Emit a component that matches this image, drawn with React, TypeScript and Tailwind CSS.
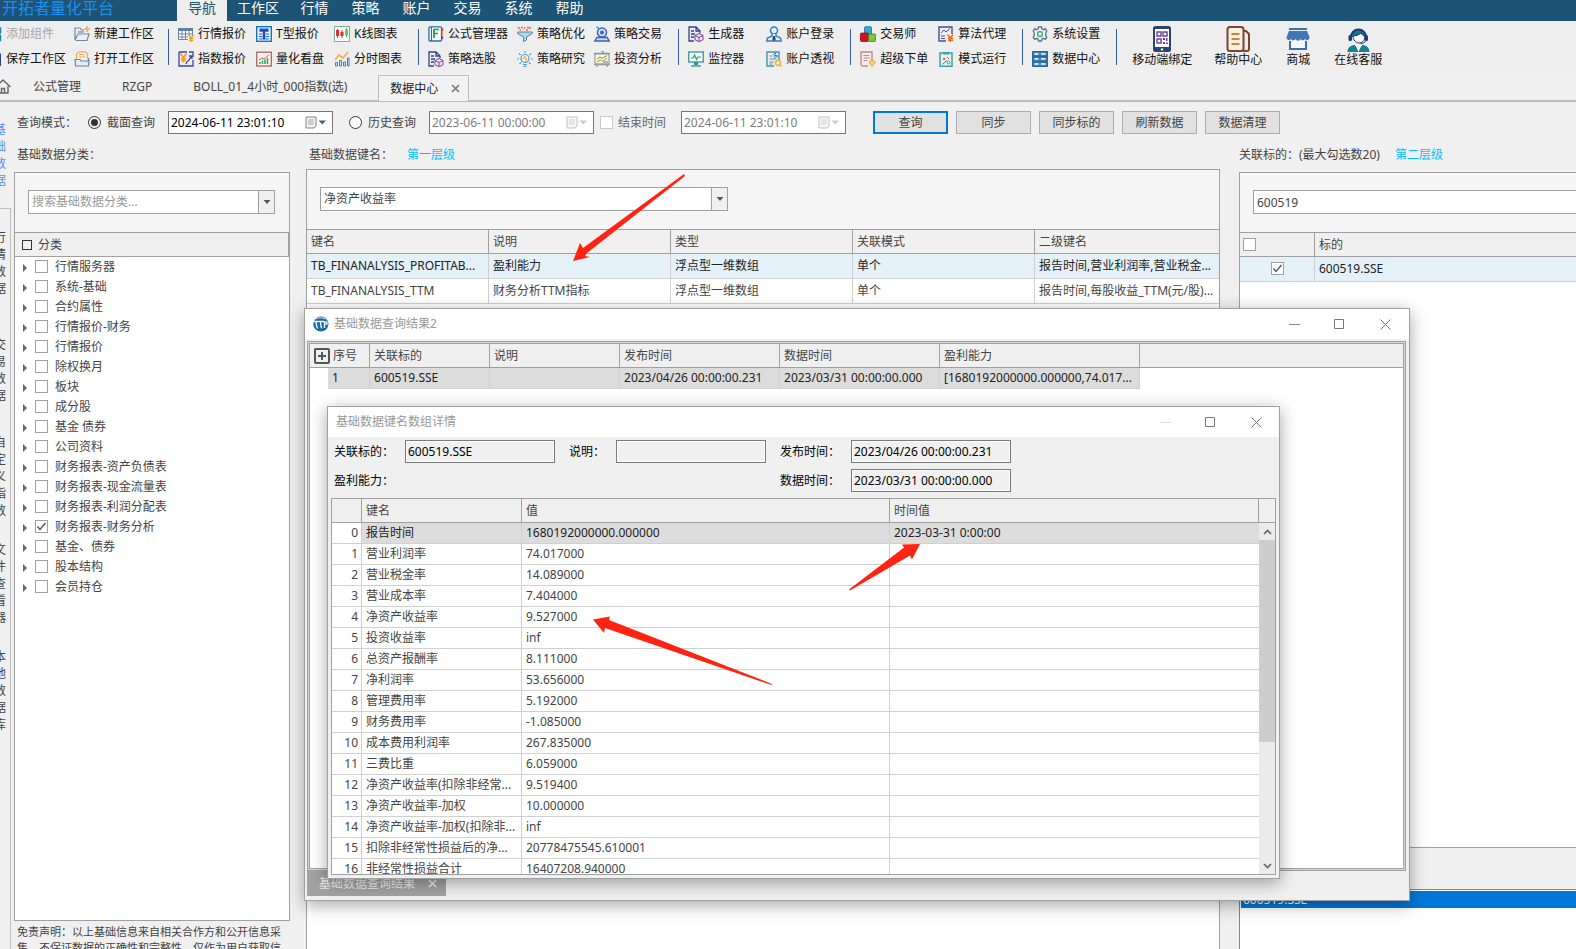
import React from 'react';

const menus = ['导航', '工作区', '行情', '策略', '账户', '交易', '系统', '帮助'];

const icons: Record<string, React.ReactNode> = {
  widgets: (
    <g fill="none" stroke="#1e86a8" strokeWidth="1.5">
      <rect x="2" y="2" width="5" height="5" />
      <rect x="9.5" y="2" width="5" height="5" />
      <rect x="2" y="9.5" width="5" height="5" />
      <rect x="9.5" y="9.5" width="5" height="5" />
    </g>
  ),
  save: (
    <g>
      <path d="M1 1h12l2 2v12H1z" fill="#2e3f8f" />
      <path d="M4 1h7v5H4zM3 9h9v6H3z" fill="#dfe6f5" />
    </g>
  ),
  folderNew: (
    <g fill="none" strokeWidth="1.2">
      <path d="M1 14V2h5l1.5 2H10M1 14l3-6h11l-2 6.5H1.5M14 8V7" stroke="#6c8ba8" />
      <path d="M4 6h6" stroke="#6c8ba8" />
      <path d="M13 0v6M10 3h6" stroke="#f0a860" strokeWidth="1.5" />
    </g>
  ),
  folderOpen: (
    <g fill="none" strokeWidth="1.2">
      <path d="M2.5 8V2.5L5 .8h6.500l2 2V8" stroke="#f0a860" fill="#fdf0dc" />
      <path d="M5 3.500h5M5 6h6.500" stroke="#f0a860" />
      <path d="M1 8.500h5l1 1.500h8l-.5 5H1.500zM14.500 10V7" stroke="#5f85a6" fill="#e4edf5" />
    </g>
  ),
  grid: (
    <g>
      <path d="M.5 2.500h14v11H.5z" fill="#fff" stroke="#6c8ba8" />
      <path d="M0 2h15v3H0z" fill="#5f7fa3" />
      <path d="M.5 8h14M.5 11h11M4 5v8.500M7.500 5v8.500M11 5v8.500" stroke="#6c8ba8" fill="none" />
      <path d="M10 9h6v7h-6z" fill="#eee" />
      <path d="M10.500 9l2.500 3 2.500-3M13 12v4M11 12.500h4M11 14.300h4" stroke="#f39a1f" strokeWidth="1.2" fill="none" />
    </g>
  ),
  tQuote: (
    <g>
      <rect x=".7" y=".7" width="14.600" height="14.600" fill="#eaf4fc" stroke="#1173c9" strokeWidth="1.400" />
      <path d="M3 3h10M3 5h3M3 8h3M3 10.500h3M10 5h3M10 8h3M10 10.500h3M3 13h10" stroke="#1173c9" />
      <path d="M4 3h8v2.500H9.300V13H6.700V5.500H4z" fill="#2b3fc0" />
    </g>
  ),
  kline: (
    <g>
      <rect x=".5" y=".5" width="15" height="15" fill="#fff" stroke="#7fae95" />
      <path d="M3.500 3v9M8 4v8" stroke="#e03030" />
      <path d="M2 4h3v6H2zM6.500 6h3v4h-3z" fill="#e03030" />
      <path d="M12.500 2v9" stroke="#36b33b" />
      <path d="M11 3.500h3V9h-3z" fill="#5cd04a" />
    </g>
  ),
  index: (
    <g fill="none">
      <path d="M1 1h8M1 1v14h14V9M15 6V1h-4" stroke="#3f449e" strokeWidth="1.300" />
      <path d="M2.500 2.500l3 4 3-4M5.500 6.500v5M3 7.500h5M3 9.500h5" stroke="#f39a1f" strokeWidth="1.500" />
      <path d="M8 13c1-4 2-2 3-4s1-2 3-4M11 5h3v3" stroke="#3f449e" strokeWidth="1.300" />
    </g>
  ),
  board: (
    <g fill="none">
      <rect x=".7" y="1.200" width="14.600" height="13.800" stroke="#a8685c" strokeWidth="1.300" fill="#f8f4f2" />
      <path d="M4 13v-2M6.500 13V9.500M9 13V8.500M11.500 13V7" stroke="#2fae5a" strokeWidth="1.600" />
      <path d="M3 9l3-2 2 1 5-4" stroke="#e0554a" />
    </g>
  ),
  minute: (
    <g fill="none">
      <path d="M1 9l4-5 4 3 5-6" stroke="#f3b24a" strokeWidth="1.700" />
      <path d="M1.500 15v-3.500h2V15zM5.500 15V9.500h2V15zM9.500 15v-4h2v4zM13.500 15V7h1.500v8z" fill="#dbe9f2" stroke="#4b7ea8" />
    </g>
  ),
  formula: (
    <g>
      <rect x="1" y=".8" width="12.500" height="14.200" rx="1" fill="#fff" stroke="#1572b8" strokeWidth="1.300" />
      <path d="M3.500 1v14" stroke="#1572b8" />
      <path d="M6 12V3.500h5M6 7.500h4" fill="none" stroke="#17a03c" strokeWidth="1.700" />
      <path d="M14.500 2v3" stroke="#e04646" strokeWidth="1.300" />
      <path d="M14.500 6v3" stroke="#f3a32c" strokeWidth="1.300" />
      <path d="M14.500 10v3" stroke="#7d3fb0" strokeWidth="1.300" />
    </g>
  ),
  docCube: (
    <g fill="none">
      <path d="M6 15H1V1h7l4 4v2M8 1v4h4M3 5h3M3 8h4M3 11h3" stroke="#2f438f" strokeWidth="1.300" />
      <path d="M11 7.500l4 2v4.200l-4 2-4-2V9.500zM7 9.500l4 2 4-2M11 11.500v4" stroke="#8c4fa8" strokeWidth="1.100" fill="#f5ebf8" />
    </g>
  ),
  funnel: (
    <g>
      <path d="M1 1l2 2M4 1.500h2M8 1l-1 2M10 1.500h2M14 1l-2 2M3 4h1M9 4h2" stroke="#e8665c" strokeWidth="1.300" />
      <path d="M.7 6h14.600v1.500L9.500 11v3l-3 1.500V11L.7 7.500z" fill="#b8d5e8" stroke="#4784aa" />
    </g>
  ),
  bulb: (
    <g fill="none">
      <path d="M8 0v2M2 2.500l1.500 1.500M14 2.500L12.500 4M0 8h2M14 8h2M2.500 13L4 11.500M13.500 13L12 11.500" stroke="#5a9dbd" strokeWidth="1.200" />
      <circle cx="8" cy="7.500" r="4" stroke="#5a9dbd" fill="#eaf5fa" strokeWidth="1.200" />
      <path d="M6 8l2-3v3h2l-2 3" stroke="#f0a342" />
      <path d="M6 13.500h4M6.500 15.300h3" stroke="#5a9dbd" strokeWidth="1.200" />
    </g>
  ),
  robot: (
    <g>
      <circle cx="3.500" cy="1.500" r="1.200" fill="#35b6e0" />
      <path d="M4 2l3 2" stroke="#35b6e0" />
      <circle cx="8" cy="6.500" r="4.500" fill="#dbe6f8" stroke="#3a5fb8" strokeWidth="1.500" />
      <circle cx="8" cy="6.500" r="2" fill="#3a5fb8" />
      <path d="M.8 15l2-3.500h10.400l2 3.500z" fill="#c9d8f3" stroke="#3a5fb8" strokeWidth="1.400" />
    </g>
  ),
  invest: (
    <g fill="none">
      <path d="M0 2.500h16M7 0h2v2" stroke="#9a9a9a" strokeWidth="1.400" />
      <rect x="1" y="3" width="14" height="10" stroke="#8a8a98" fill="#f7f7f2" />
      <path d="M3 8l3-2 2 1.500 5-3" stroke="#3fae5b" />
      <path d="M3 11l3-2 3 1 4-3" stroke="#eda92f" strokeWidth="1.300" />
      <path d="M9 11h5" stroke="#3b7ec8" />
      <path d="M2.500 16l1-3M13.500 16l-1-3M0 13.500h16" stroke="#9a9a9a" strokeWidth="1.300" />
    </g>
  ),
  monitor: (
    <g fill="none">
      <rect x=".7" y="1" width="14.600" height="10" stroke="#4e98a0" strokeWidth="1.400" fill="#f4fbfa" />
      <path d="M3 7h2l1.500-3 2 4.500L10 6h3" stroke="#25a36c" strokeWidth="1.200" />
      <path d="M6 11h4v3H6z" fill="#3f8f96" />
      <path d="M3 15h10" stroke="#3f8f96" strokeWidth="1.400" />
    </g>
  ),
  user: (
    <g>
      <circle cx="8" cy="4.500" r="3.500" fill="#e9f3fc" stroke="#2e7cc4" strokeWidth="1.500" />
      <path d="M6 8v2l-4.500 2-.7 3h14.400l-.7-3L10 10V8" fill="#e9f3fc" stroke="#2e7cc4" strokeWidth="1.400" />
      <path d="M7 10h2l.7 4L8 15l-1.700-1z" fill="#27456f" />
    </g>
  ),
  perspective: (
    <g fill="none">
      <path d="M8 15H1V1h12v8" stroke="#3d94b5" strokeWidth="1.400" />
      <path d="M3.500 5h3M3.500 8h7M3.500 11h4M3.500 13h3" stroke="#3d94b5" />
      <path d="M10 2.500c-3 0-3 2 0 2s1.500 2-2 1.500" stroke="#27689a" />
      <circle cx="12" cy="12" r="2.500" stroke="#f5b22d" strokeWidth="1.500" />
      <path d="M14 14l1.500 1.500" stroke="#f5b22d" strokeWidth="1.400" />
    </g>
  ),
  trader: (
    <g>
      <rect x="4.500" y=".7" width="7" height="7.500" rx="1" fill="#35a8e0" stroke="#1a6e9c" strokeWidth=".8" />
      <rect x=".5" y="7" width="8" height="8.500" rx="1" fill="#d3101f" stroke="#8d0a14" strokeWidth=".8" />
      <rect x="8.500" y="8" width="7" height="7.500" rx="1" fill="#7fc53a" stroke="#487d15" strokeWidth=".8" />
    </g>
  ),
  order: (
    <g fill="none">
      <path d="M8 15H3a2 2 0 01-2-2V1h11v8" stroke="#c68a80" strokeWidth="1.400" />
      <path d="M3.500 4.500h6M3.500 7h6M3.500 9.500h4" stroke="#c68a80" />
      <path d="M9 11l2-1.500h3L15.500 11 12 15.500z" fill="#fbd27a" stroke="#e9a43a" />
    </g>
  ),
  algo: (
    <g fill="none">
      <path d="M8 15H1V1h13v7" stroke="#40509c" strokeWidth="1.400" />
      <path d="M3 7l3-3 2 2 4-3.500M3 10h4M3 12.500h4" stroke="#40509c" />
      <path d="M9.500 8.500L12.300 12l2.700-3.500M12.300 12v4M10 12.300h5M10 14.300h5" stroke="#ee6b1c" strokeWidth="1.400" />
    </g>
  ),
  mode: (
    <g fill="none">
      <path d="M2 2h12v13.300H2z" stroke="#3f9fae" strokeWidth="1.500" />
      <path d="M5 1h6v2.500H5z" fill="#3f9fae" />
      <path d="M5 7l2 2M7 7L5 9M9 6l2 2" stroke="#e0554a" />
      <circle cx="10.500" cy="11.500" r="1.500" stroke="#2fae5a" />
      <path d="M4.500 13c2 0 2-3 4-3" stroke="#27689a" />
    </g>
  ),
  gear: (
    <g fill="none">
      <path
        d="M6.500 1h3l.5 2 1.500.7L13.300 2.600l1.500 2.200-1 1.700v3l1 1.700-1.500 2.200-1.800-1.100L10 13l-.5 2h-3L6 13l-1.500-.7-1.800 1.100-1.500-2.200 1-1.700v-3l-1-1.700 1.500-2.200 1.800 1.100L6 3z"
        stroke="#54718a"
        strokeWidth="1.300"
        fill="#f5f8fa"
      />
      <circle cx="8" cy="8" r="2.500" stroke="#3bb273" strokeWidth="1.400" />
    </g>
  ),
  server: (
    <g>
      <rect x=".6" y=".6" width="14.800" height="4.500" fill="#3d83bd" stroke="#235a87" />
      <rect x=".6" y="5.700" width="14.800" height="4.500" fill="#3d83bd" stroke="#235a87" />
      <rect x=".6" y="10.900" width="14.800" height="4.500" fill="#3d83bd" stroke="#235a87" />
      <path d="M2.500 3h4M9 3h4.500M2.500 8h4M9 8h4.500M2.500 13h4M9 13h4.500" stroke="#fff" strokeWidth="1.300" />
    </g>
  ),
};

type Tool = { icon: string; label: string; muted?: boolean };

const toolGroups: Tool[][][] = [
  [
    [{ icon: 'grid', label: '行情报价' }, { icon: 'index', label: '指数报价' }],
    [{ icon: 'tQuote', label: 'T型报价' }, { icon: 'board', label: '量化看盘' }],
    [{ icon: 'kline', label: 'K线图表' }, { icon: 'minute', label: '分时图表' }],
  ],
  [
    [{ icon: 'formula', label: '公式管理器' }, { icon: 'docCube', label: '策略选股' }],
    [{ icon: 'funnel', label: '策略优化' }, { icon: 'bulb', label: '策略研究' }],
    [{ icon: 'robot', label: '策略交易' }, { icon: 'invest', label: '投资分析' }],
  ],
  [
    [{ icon: 'docCube', label: '生成器' }, { icon: 'monitor', label: '监控器' }],
    [{ icon: 'user', label: '账户登录' }, { icon: 'perspective', label: '账户透视' }],
  ],
  [
    [{ icon: 'trader', label: '交易师' }, { icon: 'order', label: '超级下单' }],
    [{ icon: 'algo', label: '算法代理' }, { icon: 'mode', label: '模式运行' }],
  ],
  [[{ icon: 'gear', label: '系统设置' }, { icon: 'server', label: '数据中心' }]],
];

const firstGroup: Tool[][] = [
  [{ icon: 'widgets', label: '添加组件', muted: true }, { icon: 'save', label: '保存工作区' }],
  [{ icon: 'folderNew', label: '新建工作区' }, { icon: 'folderOpen', label: '打开工作区' }],
];

const bigTools = [
  {
    label: '移动端绑定',
    drawing: (
      <g>
        <rect x="5" y="0" width="18" height="26" rx="2.500" fill="#2c4270" />
        <rect x="7" y="3" width="14" height="18" fill="#fff" />
        <path d="M9 6h4v4H9zM15 6h4v4h-4zM9 13h4v4H9z" fill="none" stroke="#6b3fa0" strokeWidth="1.400" />
        <path d="M15 12h2v2h-2zM18 12h1.500v3H18zM15 16h2v2h-2zM18 16.500h2v1.500h-2z" fill="#6b3fa0" />
        <circle cx="14" cy="23.400" r="1.200" fill="#fff" />
      </g>
    ),
  },
  {
    label: '帮助中心',
    drawing: (
      <g fill="none">
        <rect x="3.500" y="1" width="16" height="24" rx="2.500" stroke="#7b452c" strokeWidth="2" fill="#f7efe9" />
        <path d="M20 5h2l3 3v15a2 2 0 01-2 2h-4" stroke="#7b452c" strokeWidth="2" />
        <path d="M7.500 8h8M7.500 13h8M7.500 18h8" stroke="#cc8334" strokeWidth="2" />
      </g>
    ),
  },
  {
    label: '商城',
    drawing: (
      <g>
        <path d="M5 2h18v2H5z" fill="#3c6fae" />
        <path d="M5 5h18l2.500 6v1a2.500 2.500 0 01-4.500 1 2.700 2.700 0 01-4.500 0 2.700 2.700 0 01-5 0 2.700 2.700 0 01-4.500 0 2.500 2.500 0 01-4.500-1v-1z" fill="#4376b5" />
        <path d="M6 15v8h16v-8" fill="#f4f7fb" stroke="#3c6fae" strokeWidth="2" />
      </g>
    ),
  },
  {
    label: '在线客服',
    drawing: (
      <g>
        <path d="M7 11a7.500 7.500 0 0115 0" fill="#18728a" stroke="#1c3a70" strokeWidth="2" />
        <path d="M9 10c3 0 6-1 8-3 1 2 2 3 4 3-.5 5-3 7-6 7s-6-3-6-7z" fill="#fff" stroke="#1c3a70" />
        <rect x="4.500" y="9" width="3.500" height="6" rx="1.500" fill="#1c3a70" />
        <rect x="20.500" y="9" width="3.500" height="6" rx="1.500" fill="#1c3a70" />
        <path d="M21.500 15c-1 2-3 2.500-5 2.500" stroke="#1c3a70" fill="none" />
        <path d="M3.500 26c0-5 4-7 7-7l4 4 4-4c3 0 7 2 7 7z" fill="#18828f" />
        <path d="M11.500 19l3 7 3-7z" fill="#fff" />
      </g>
    ),
  },
];

const sideTabs = ['基础数据', '行情数据', '交易数据', '自定义指数', '文件查看器', '本地数据库'];

const categories = [
  '行情服务器', '系统-基础', '合约属性', '行情报价-财务', '行情报价', '除权换月', '板块', '成分股', '基金 债券',
  '公司资料', '财务报表-资产负债表', '财务报表-现金流量表', '财务报表-利润分配表', '财务报表-财务分析',
  '基金、债券', '股本结构', '会员持仓',
];

const keyRows = [
  ['TB_FINANALYSIS_PROFITAB...', '盈利能力', '浮点型一维数组', '单个', '报告时间,营业利润率,营业税金...'],
  ['TB_FINANALYSIS_TTM', '财务分析TTM指标', '浮点型一维数组', '单个', '报告时间,每股收益_TTM(元/股)...'],
];

const detailRows = [
  ['报告时间', '1680192000000.000000', '2023-03-31 0:00:00'],
  ['营业利润率', '74.017000', ''],
  ['营业税金率', '14.089000', ''],
  ['营业成本率', '7.404000', ''],
  ['净资产收益率', '9.527000', ''],
  ['投资收益率', 'inf', ''],
  ['总资产报酬率', '8.111000', ''],
  ['净利润率', '53.656000', ''],
  ['管理费用率', '5.192000', ''],
  ['财务费用率', '-1.085000', ''],
  ['成本费用利润率', '267.835000', ''],
  ['三费比重', '6.059000', ''],
  ['净资产收益率(扣除非经常...', '9.519400', ''],
  ['净资产收益率-加权', '10.000000', ''],
  ['净资产收益率-加权(扣除非...', 'inf', ''],
  ['扣除非经常性损益后的净...', '20778475545.610001', ''],
  ['非经常性损益合计', '16407208.940000', ''],
];

const ToolColumn: React.FC<{ tools: Tool[] }> = ({ tools }) => (
  <div className="flex min-w-[68px] shrink-0 flex-col gap-[9px]">
    {tools.map((t) => (
      <button
        key={t.label}
        className={`flex h-4 items-center gap-1 whitespace-nowrap ${t.muted ? 'text-[#a5a5a5]' : 'text-[#111]'}`}
      >
        <svg viewBox="0 0 16 16" className="h-4 w-4 shrink-0">{icons[t.icon]}</svg>
        {t.label}
      </button>
    ))}
  </div>
);

const Divider = () => <div className="h-9 w-px shrink-0 bg-[#2f5f9e]" />;

const CheckBox: React.FC<{ label: string; checked?: boolean; id?: string; light?: boolean }> = ({ label, checked, id, light }) => (
  <span className="relative mb-px inline-block h-[13px] w-[13px] shrink-0">
    <input
      type="checkbox"
      id={id}
      aria-label={label}
      defaultChecked={checked}
      className={`peer block h-[13px] w-[13px] appearance-none border bg-white ${light ? 'border-[#c8c8c8]' : 'border-[#a0a0a0]'}`}
    />
    <svg viewBox="0 0 13 13" className="pointer-events-none absolute inset-0 hidden h-[13px] w-[13px] peer-checked:block">
      <path d="M2.500 6.500l2.500 3 5.500-6.500" fill="none" stroke="#555" strokeWidth="1.400" />
    </svg>
  </span>
);

const DateBox: React.FC<{ label: string; value: string; muted?: boolean }> = ({ label, value, muted }) => (
  <div className="flex h-[23px] w-[165px] shrink-0 items-center border border-[#767676] bg-white">
    <input
      aria-label={label}
      defaultValue={value}
      className={`h-full min-w-0 flex-1 pl-0.5 outline-none ${muted ? 'text-[#7c7c7c]' : 'text-black'}`}
    />
    <button aria-label="选择日期" className={`flex w-[27px] items-center ${muted ? 'opacity-50' : ''}`}>
      <svg viewBox="0 0 22 13" className="h-[13px] w-[22px]">
        <path d="M1 1h10v9l-2 2H1z" fill="#f3f3f3" stroke="#8a8080" />
        <path d="M3 4h6M3 6h6M3 8h6M4 3v6M6 3v6M8 3v6" stroke="#a8b4c4" strokeWidth=".7" />
        <path d="M13.500 4.500h7.500l-3.700 4z" fill={muted ? '#999' : '#3f5f8f'} />
      </svg>
    </button>
  </div>
);

const SearchBox: React.FC<{ label: string; value?: string; placeholder?: string; className: string }> = ({ label, value, placeholder, className }) => (
  <div className={`flex h-6 border border-[#a0a0a0] bg-white ${className}`}>
    <input
      aria-label={label}
      defaultValue={value}
      placeholder={placeholder}
      className="min-w-0 flex-1 pl-[3px] outline-none placeholder:text-[#999]"
    />
    <button aria-label="展开" className="flex w-4 items-center justify-center border-l border-[#a0a0a0] bg-[#f0f0f0]">
      <svg viewBox="0 0 8 4" className="h-1 w-2"><path d="M0.500 0h7L4 4z" fill="#555" /></svg>
    </button>
  </div>
);

const WindowButtons: React.FC<{ noMin?: boolean }> = ({ noMin }) => (
  <div className="flex h-full">
    <button aria-label="最小化" disabled={noMin} className="flex w-[46px] items-center justify-center">
      <svg viewBox="0 0 11 11" className="h-[11px] w-[11px]"><path d="M0 5.500h11" stroke={noMin ? '#ddd' : '#888'} /></svg>
    </button>
    <button aria-label="最大化" className="flex w-[45px] items-center justify-center">
      <svg viewBox="0 0 11 11" className="h-[11px] w-[11px]"><path d="M.5.5h9v9h-9z" fill="none" stroke="#777" /></svg>
    </button>
    <button aria-label="关闭" className="flex w-[46px] items-center justify-center">
      <svg viewBox="0 0 11 11" className="h-[11px] w-[11px]"><path d="M.5.5l10 10M10.500.5l-10 10" stroke="#777" /></svg>
    </button>
  </div>
);

const th = 'border-r border-b border-[#a0a0a0] bg-[#f0f0f0] px-1 text-left font-normal whitespace-nowrap overflow-hidden';
const td = 'border-r border-b border-[#d0d0d0] px-1 whitespace-nowrap overflow-hidden';

const TopBar = () => (
  <header>
    <nav className="flex h-[21px] items-start bg-[#1d5374] text-sm leading-4 text-white">
      <div className="w-[177px] shrink-0 pl-0.5 text-base leading-4 text-[#1e8ff0]">开拓者量化平台</div>
      {menus.map((m, i) => (
        <button
          key={m}
          className={`h-[21px] pb-[6px] leading-[15px] ${m.length === 3 ? 'w-[62px]' : i === 0 ? 'w-[50px]' : 'w-[51px]'} ${i === 0 ? 'bg-[#eee] text-[#1d5374]' : ''}`}
        >
          {m}
        </button>
      ))}
    </nav>
    <div className="flex h-[50px] items-center overflow-hidden bg-[#eee] pt-px">
      <div className="-ml-[14px] flex shrink-0 gap-2 pr-[14px]">
        {firstGroup.map((c) => <ToolColumn key={c[0].label} tools={c} />)}
      </div>
      {toolGroups.map((group, i) => (
        <React.Fragment key={group[0][0].label}>
          <Divider />
          <div className={`flex shrink-0 pr-4 pl-[9px] ${i === 1 ? 'gap-[9px]' : 'gap-[10px]'}`}>
            {group.map((c) => <ToolColumn key={c[0].label} tools={c} />)}
          </div>
        </React.Fragment>
      ))}
      <Divider />
      <div className="flex gap-[22px] pl-[15px]">
        {bigTools.map((b) => (
          <button key={b.label} className="flex flex-col items-center whitespace-nowrap text-[#111]">
            <svg viewBox="0 0 28 26" className="h-[26px] w-7">{b.drawing}</svg>
            <span className="leading-4">{b.label}</span>
          </button>
        ))}
      </div>
    </div>
    <div className="flex h-[31px] items-end border-b-2 border-[#bdbdbd]">
      <button aria-label="主页" className="mb-1.5 -ml-[5px] h-4 w-4">
        <svg viewBox="0 0 16 16" className="h-4 w-4" fill="none" stroke="#666" strokeWidth="1.400">
          <path d="M.5 9L8 2l7.500 7M3 8v7h10V8M6.500 15v-4.500h3V15" />
        </svg>
      </button>
      <div className="flex h-[26px] items-center pl-[22px]">
        <button className="mr-[41px]">公式管理</button>
        <button className="mr-[41px]">RZGP</button>
        <button className="w-[155px] text-left whitespace-nowrap">BOLL_01_4小时_000指数(选)</button>
      </div>
      <div className="-mb-0.5 ml-[30px] flex h-[27px] w-[91px] items-center border border-[#bdbdbd] bg-[#f2f2f2] pl-[11px] text-[#222]">
        数据中心
        <button aria-label="关闭标签" className="ml-[13px]">
          <svg viewBox="0 0 9 9" className="h-[9px] w-[9px]"><path d="M1 1l7 7M8 1L1 8" stroke="#777" strokeWidth="1.600" /></svg>
        </button>
      </div>
    </div>
  </header>
);

const QueryBar = () => (
  <div className="flex h-10 items-center pt-px pl-[3px] whitespace-nowrap">
    <span className="w-[71px]">查询模式：</span>
    <label className="flex w-20 items-center gap-[6px]">
      <input type="radio" name="mode" defaultChecked className="h-[13px] w-[13px] appearance-none rounded-full border border-[#333] bg-[#333] bg-clip-content p-0.5" />
      截面查询
    </label>
    <DateBox label="截面时间" value="2024-06-11 23:01:10" />
    <label className="ml-4 flex w-20 items-center gap-[6px]">
      <input type="radio" name="mode" className="h-[13px] w-[13px] appearance-none rounded-full border border-[#333] bg-white p-0.5" />
      历史查询
    </label>
    <DateBox label="开始时间" value="2023-06-11 00:00:00" muted />
    <label htmlFor="end" className="ml-[6px] flex w-[81px] items-center gap-[5px] text-[#666]">
      <CheckBox id="end" label="结束时间" light />
      结束时间
    </label>
    <DateBox label="结束时间" value="2024-06-11 23:01:10" muted />
    <div className="ml-[27px] flex gap-2">
      {['查询', '同步', '同步标的', '刷新数据', '数据清理'].map((b, i) => (
        <button
          key={b}
          className={`h-[23px] w-[75px] bg-[#e1e1e1] ${i === 0 ? 'border-2 border-[#0078d7]' : 'border border-[#adadad]'}`}
        >
          {b}
        </button>
      ))}
    </div>
  </div>
);

const CategoryPanel = () => (
  <section className="flex w-[276px] shrink-0 flex-col">
    <h2 className="h-[30px] pl-[3px] leading-[26px]">基础数据分类：</h2>
    <div className="flex-1 border border-[#a0a0a0] bg-white">
      <div className="h-[59px] bg-[#f5f5f5] pt-[17px] pl-[13px]">
        <SearchBox label="搜索基础数据分类" placeholder="搜索基础数据分类..." className="w-[247px]" />
      </div>
      <div className="flex h-[25px] items-center gap-[6px] border-y border-r border-[#a0a0a0] bg-[#f0f0f0] pl-[7px]">
        <span className="h-[10px] w-[10px] border border-[#333]" />
        分类
      </div>
      <ul>
        {categories.map((c) => (
          <li key={c} className="flex h-5 items-center pl-2">
            <button aria-label={`展开${c}`} className="mr-2 pt-0.5">
              <svg viewBox="0 0 4 8" className="h-2 w-1"><path d="M0 0l4 4-4 4z" fill="#666" /></svg>
            </button>
            <label className="flex items-center gap-[7px]">
              <CheckBox label={c} checked={c === '财务报表-财务分析'} />
              {c}
            </label>
          </li>
        ))}
      </ul>
    </div>
    <p className="h-[28px] overflow-hidden pt-[3px] pl-[3px] text-[11px] leading-4 whitespace-nowrap">
      免责声明：以上基础信息来自相关合作方和公开信息采<br />
      集，不保证数据的正确性和完整性，仅作为用户获取信
    </p>
  </section>
);

const KeyPanel = () => (
  <section className="ml-4 flex min-w-0 flex-1 flex-col">
    <h2 className="h-[27px] pl-[3px] leading-[26px]">
      基础数据键名：<a href="#level1" className="ml-[14px] text-[#00bfff]">第一层级</a>
    </h2>
    <div className="flex-1 border border-b-0 border-[#a0a0a0] bg-white">
      <div className="h-[59px] bg-[#f5f5f5] pt-[17px] pl-[13px]">
        <SearchBox label="搜索键名" value="净资产收益率" className="w-[408px]" />
      </div>
      <table className="w-full table-fixed border-separate border-spacing-0">
        <thead>
          <tr className="h-[25px]">
            <th className={`${th} w-[182px] border-t`}>键名</th>
            <th className={`${th} w-[182px] border-t`}>说明</th>
            <th className={`${th} w-[182px] border-t`}>类型</th>
            <th className={`${th} w-[182px] border-t`}>关联模式</th>
            <th className={`${th} border-t border-r-0`}>二级键名</th>
          </tr>
        </thead>
        <tbody>
          {keyRows.map((row, i) => (
            <tr key={row[0]} className={`h-[25px] ${i === 0 ? 'bg-[#e4f1f9] text-[#222]' : ''}`}>
              {row.map((cell, j) => <td key={j} className={`${td} last:border-r-0`}>{cell}</td>)}
            </tr>
          ))}
        </tbody>
      </table>
    </div>
  </section>
);

const SymbolPanel = () => (
  <section className="ml-[19px] flex w-[337px] shrink-0 flex-col">
    <h2 className="h-[30px] leading-[26px]">
      关联标的：(最大勾选数20)<a href="#level2" className="ml-[15px] text-[#00bfff]">第二层级</a>
    </h2>
    <div className="flex-1 border border-r-0 border-[#a0a0a0] bg-white">
      <div className="h-[59px] bg-[#f5f5f5] pt-[17px] pl-[13px]">
        <input
          aria-label="搜索标的"
          defaultValue="600519"
          className="block h-6 w-full border border-r-0 border-[#a0a0a0] bg-white pl-[3px] outline-none"
        />
      </div>
      <table className="w-full table-fixed border-separate border-spacing-0">
        <thead>
          <tr className="h-[25px]">
            <th className={`${th} w-[75px] border-t pl-[3px]`}>
              <span className="flex"><CheckBox label="全选" /></span>
            </th>
            <th className={`${th} border-t border-r-0`}>标的</th>
          </tr>
        </thead>
        <tbody>
          <tr className="h-[25px] bg-[#e4f1f9] text-[#222]">
            <td className={td}><span className="flex justify-center"><CheckBox label="600519.SSE" checked /></span></td>
            <td className={`${td} border-r-0`}>600519.SSE</td>
          </tr>
        </tbody>
      </table>
    </div>
    <ul className="mt-[41px] h-[60px] border border-r-0 border-b-0 border-[#828790] bg-white pt-px pl-px">
      <li className="h-[17px] bg-[#0078d7] pl-0.5 leading-[17px] text-white">600519.SSE</li>
    </ul>
  </section>
);

const ResultWindow = () => (
  <div className="absolute top-[308px] left-[304px] flex h-[593px] w-[1106px] flex-col border border-[#a0a0a0] bg-[#f0f0f0] shadow-[0_4px_16px_rgba(0,0,0,0.35)]">
    <div className="flex h-[30px] items-center bg-white pr-px pl-2 text-[#999]">
      <svg viewBox="0 0 16 16" className="mr-[5px] h-4 w-4">
        <circle cx="7.800" cy="8" r="7.600" fill="#1668ad" />
        <path d="M0 5.500h7M3 5.500c0 3 .5 5 1.500 7M7 5.500h4M7.500 5.500c0 3 .3 5 1.200 7M11.500 12V5.800h1.500c1.500 0 1.500 2.500-1 2.500" fill="none" stroke="#fff" strokeWidth="1.300" />
        <path d="M2.500 3C5 1.500 9 1.300 12.500 3" stroke="#fff" strokeWidth=".8" fill="none" />
        <path d="M14 6.500l2 1.500-2 1.500z" fill="#f29a2e" />
      </svg>
      基础数据查询结果2
      <div className="ml-auto h-full"><WindowButtons /></div>
    </div>
    <div className="mt-0.5 mr-[3px] ml-0.5 flex flex-1 border border-[#a0a0a0] bg-[#d4d4d4] p-px">
      <div className="flex-1 border border-[#a0a0a0] bg-white">
        <table className="w-full table-fixed border-separate border-spacing-0">
          <colgroup>
            <col className="w-[18px]" />
            <col className="w-[42px]" />
            <col className="w-[120px]" />
            <col className="w-[130px]" />
            <col className="w-[160px]" />
            <col className="w-[160px]" />
            <col className="w-[200px]" />
            <col />
          </colgroup>
          <thead>
            <tr className="h-6">
              <th colSpan={2} className={th}>
                <span className="flex items-center gap-[3px]">
                  <svg viewBox="0 0 16 16" className="h-4 w-4" fill="none" stroke="#555">
                    <rect x="1" y="1" width="14" height="14" rx="1" strokeWidth="2" />
                    <path d="M8 4v8M4 8h8" strokeWidth="2" />
                  </svg>
                  序号
                </span>
              </th>
              <th className={th}>关联标的</th>
              <th className={th}>说明</th>
              <th className={th}>发布时间</th>
              <th className={th}>数据时间</th>
              <th className={th}>盈利能力</th>
              <th className={`${th} border-r-0`} />
            </tr>
          </thead>
          <tbody>
            <tr className="h-[21px] text-[#222]">
              <td />
              {['1', '600519.SSE', '', '2023/04/26 00:00:00.231', '2023/03/31 00:00:00.000', '[1680192000000.000000,74.017...'].map((v, i) => (
                <td key={i} className={`${td} bg-[#dcdcdc]`}>{v}</td>
              ))}
              <td />
            </tr>
          </tbody>
        </table>
      </div>
    </div>
    <div className="mb-1 ml-0.5 flex h-[25px] w-[139px] items-center bg-[#a3a3a3] pl-3 text-[#eee]">
      基础数据查询结果
      <button aria-label="关闭结果" className="ml-[13px]">
        <svg viewBox="0 0 9 9" className="h-[9px] w-[9px]"><path d="M1 1l7 7M8 1L1 8" stroke="#eee" strokeWidth="1.600" /></svg>
      </button>
    </div>
  </div>
);

const Field: React.FC<{ id: string; label: string; value: string; className: string }> = ({ id, label, value, className }) => (
  <>
    <label htmlFor={id}>{label}：</label>
    <input
      id={id}
      readOnly
      defaultValue={value}
      className={`h-[23px] border border-[#7a7a7a] bg-[#f0f0f0] pl-[2px] ring-1 ring-white outline-none ring-inset ${className}`}
    />
  </>
);

const DetailWindow = () => (
  <div className="absolute top-[406px] left-[327px] flex h-[473px] w-[953px] flex-col border border-[#a0a0a0] bg-[#f0f0f0] shadow-[0_4px_16px_rgba(0,0,0,0.35)]">
    <div className="flex h-[30px] shrink-0 items-center bg-white pl-2 text-[#999]">
      基础数据键名数组详情
      <div className="ml-auto h-full"><WindowButtons noMin /></div>
    </div>
    <div className="grid shrink-0 grid-cols-[71px_164px_47px_164px_71px_160px] items-center gap-y-[6px] pt-[3px] pb-[6px] pl-[6px] text-black">
      <Field id="symbol" label="关联标的" value="600519.SSE" className="w-[150px]" />
      <Field id="desc" label="说明" value="" className="w-[150px]" />
      <Field id="published" label="发布时间" value="2023/04/26 00:00:00.231" className="w-full" />
      <span className="col-span-4">盈利能力：</span>
      <Field id="dataTime" label="数据时间" value="2023/03/31 00:00:00.000" className="w-full" />
    </div>
    <div className="mr-[3px] mb-[3px] ml-[3px] flex min-h-0 flex-1 overflow-hidden border border-[#a0a0a0] bg-white">
      <div className="min-w-0 flex-1 overflow-hidden">
        <table className="w-full table-fixed border-separate border-spacing-0">
          <thead>
            <tr className="h-6">
              <th className={`${th} w-[30px]`} />
              <th className={`${th} w-40`}>键名</th>
              <th className={`${th} w-[368px]`}>值</th>
              <th className={th}>时间值</th>
            </tr>
          </thead>
          <tbody>
            {detailRows.map((row, i) => (
              <tr key={row[0]} className="h-[21px]">
                <td className={`${td} pr-[3px] pl-0 text-right`}>{i}</td>
                {row.map((cell, j) => (
                  <td key={j} className={`${td} ${i === 0 ? 'bg-[#dcdcdc] text-[#222]' : ''} ${j === 2 ? 'border-r-0' : ''}`}>{cell}</td>
                ))}
              </tr>
            ))}
          </tbody>
        </table>
      </div>
      <div className="flex w-4 flex-col bg-[#ebebeb]">
        <div className="h-6 border-b border-[#a0a0a0] bg-[#f0f0f0]" />
        <button aria-label="向上" className="flex h-[17px] items-center justify-center">
          <svg viewBox="0 0 9 6" className="h-[6px] w-[9px]"><path d="M1 5l3.500-3.500L8 5" fill="none" stroke="#666" strokeWidth="1.700" /></svg>
        </button>
        <div className="h-[202px] bg-[#cdcdcd]" />
        <button aria-label="向下" className="mt-auto flex h-[17px] items-center justify-center">
          <svg viewBox="0 0 9 6" className="h-[6px] w-[9px]"><path d="M1 1l3.500 3.500L8 1" fill="none" stroke="#666" strokeWidth="1.700" /></svg>
        </button>
      </div>
    </div>
  </div>
);

const App: React.FC = () => {
  return (
    <div className="relative flex h-screen flex-col overflow-hidden bg-[#f0f0f0] font-['Noto_Sans','Noto_Sans_CJK_SC',sans-serif] text-xs leading-4 text-[#444]">
      <TopBar />
      <div className="flex min-h-0 flex-1">
        <aside className="flex w-[11px] shrink-0 flex-col overflow-hidden">
          <button className="-ml-[6px] flex h-[106px] w-3 shrink-0 items-center leading-[17px] break-all text-[#5b8def]">
            {sideTabs[0]}
          </button>
          <div className="flex-1 overflow-hidden border-t border-r border-[#c0c0c0]">
            {sideTabs.slice(1).map((t) => (
              <button key={t} className="-ml-[6px] flex h-[107px] w-3 items-center leading-[17px] break-all">{t}</button>
            ))}
          </div>
        </aside>
        <main className="ml-[3px] flex min-w-0 flex-1 flex-col">
          <QueryBar />
          <div className="flex min-h-0 flex-1">
            <CategoryPanel />
            <KeyPanel />
            <SymbolPanel />
          </div>
        </main>
      </div>

      <ResultWindow />
      <DetailWindow />

      {/* Annotation arrows */}
      <svg width="1576" height="949" className="pointer-events-none absolute top-0 left-0" fill="#ff2412">
        <path d="M573 261L580 243l3 5L684 174l1 2-98 77-2 3 5 1z" />
        <path d="M920 544l-18 .5 2 3-55 42 1 1 60-35 2 4z" />
        <path d="M593 619.500l17-3-1 3.500 163 64-.5 1L605 628l-1 5z" />
      </svg>
    </div>
  );
};

export default App;
